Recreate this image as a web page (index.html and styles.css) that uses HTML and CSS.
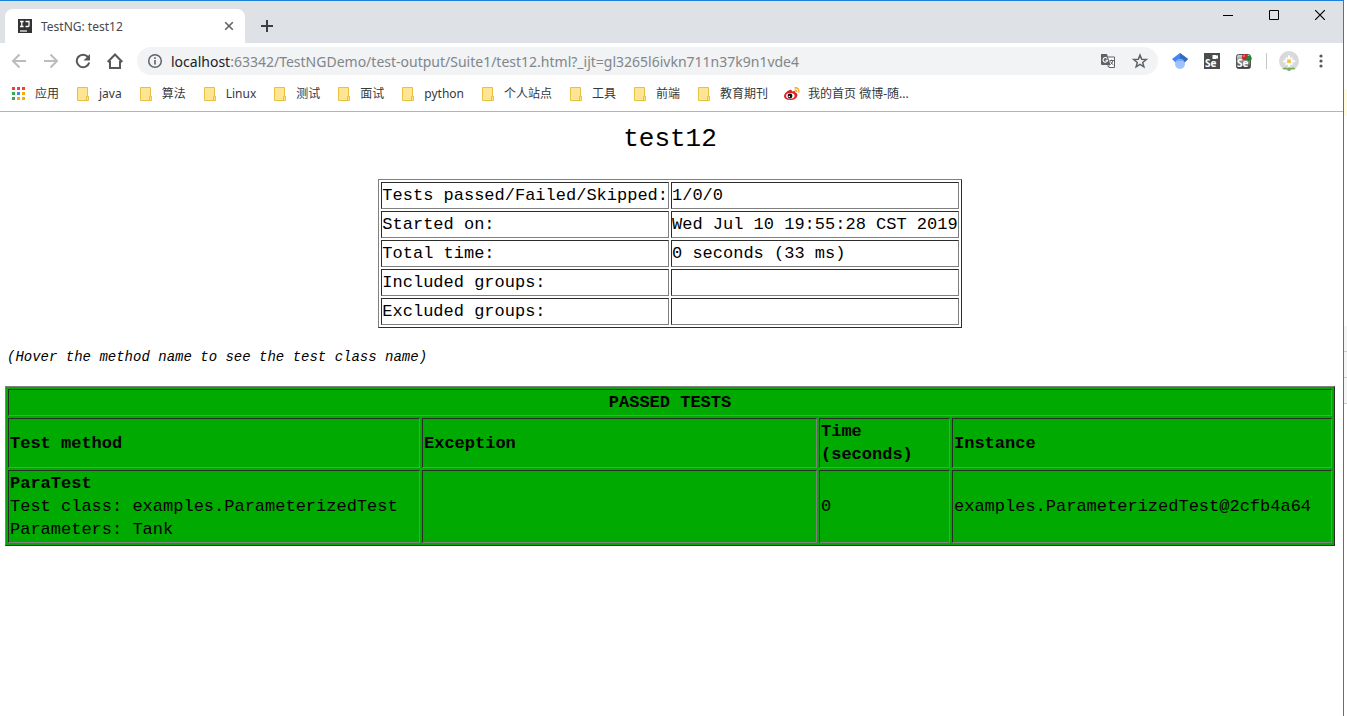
FILE: index.html
```html
<!DOCTYPE html>
<html lang="zh-CN">
<head>
<meta charset="utf-8">
<title>TestNG: test12</title>
<link rel="stylesheet" href="styles.css">
</head>
<body>
<div class="desktop">
<div class="window">
  <header class="tabstrip">
    <div class="tab">
      <svg class="favicon" width="14" height="14" viewBox="0 0 14 14"><rect width="14" height="14" fill="#333"/><path d="M2 2.500h3.600M3.800 2.500v5M2 7.500h3.600M7.500 2.500h3.500v4q0 1-1 1H7.500" fill="none" stroke="#fff" stroke-width="1.300"/><path d="M2 12h7" stroke="#fff" stroke-width="1.200"/></svg>
      <span class="tab-title">TestNG: test12</span>
      <button class="plain tab-close" aria-label="Close tab"><svg width="10" height="10" viewBox="0 0 10 10"><path d="M1.200 1.200l7.600 7.600M8.800 1.200L1.200 8.800" stroke="#5f6368" stroke-width="1.600"/></svg></button>
    </div>
    <button class="plain new-tab" aria-label="New tab"><svg width="12" height="12" viewBox="0 0 12 12"><path d="M6 0v12M0 6h12" stroke="#3c4043" stroke-width="2"/></svg></button>
    <div class="window-buttons">
      <button class="plain" aria-label="Minimize"><svg width="10" height="10" viewBox="0 0 10 10"><path d="M0 5.500h10" stroke="#000"/></svg></button>
      <button class="plain" aria-label="Maximize"><svg width="10" height="10" viewBox="0 0 10 10"><path d="M.5.5h9v9h-9z" fill="none" stroke="#000"/></svg></button>
      <button class="plain" aria-label="Close"><svg width="10" height="10" viewBox="0 0 10 10"><path d="M0 0l10 10M10 0L0 10" stroke="#000" stroke-width="1.200"/></svg></button>
    </div>
  </header>

  <div class="toolbar">
    <nav class="nav-buttons">
      <button class="plain" aria-label="Back"><svg width="16" height="16" viewBox="0 0 16 16"><path d="M15 8H2.500M8.500 1.500L2 8l6.500 6.500" fill="none" stroke="#babcbe" stroke-width="2"/></svg></button>
      <button class="plain" aria-label="Forward"><svg width="16" height="16" viewBox="0 0 16 16"><path d="M1 8h12.500M7.500 1.500L14 8l-6.500 6.500" fill="none" stroke="#babcbe" stroke-width="2"/></svg></button>
      <button class="plain" aria-label="Reload"><svg width="16" height="16" viewBox="0 0 16 16"><path d="M13 4A6.300 6.300 0 1 0 14.200 9.500" fill="none" stroke="#55585d" stroke-width="2"/><path d="M15 1v6.500H8.500z" fill="#55585d"/></svg></button>
      <button class="plain" aria-label="Home"><svg width="16" height="16" viewBox="0 0 16 16"><path d="M.7 9L8 1.500 15.300 9M3 8v7h10V8" fill="none" stroke="#55585d" stroke-width="2"/></svg></button>
    </nav>
    <div class="omnibox">
      <svg class="info" width="16" height="16" viewBox="0 0 16 16"><circle cx="8" cy="8" r="6.300" fill="none" stroke="#5f6368" stroke-width="1.500"/><path d="M8 7v4.500M8 4.300v1.700" stroke="#5f6368" stroke-width="1.600"/></svg>
      <label class="host" for="url">localhost</label>
      <input class="url" id="url" type="text" value=":63342/TestNGDemo/test-output/Suite1/test12.html?_ijt=gl3265l6ivkn711n37k9n1vde4">
      <button class="plain translate" aria-label="Translate"><svg width="16" height="16" viewBox="0 0 16 16"><path d="M8 4h6.500v10.500H9" fill="#fff" stroke="#5f6368"/><path d="M1 1h6l3.500 11H2q-1 0-1-1z" fill="#5f6368"/><path d="M7.200 5.500A2.300 2.300 0 1 0 7.600 7.200H5.500" fill="none" stroke="#fff" stroke-width="1.100"/><path d="M9.500 7.500H14M11.700 6.500v1M13 7.500q-.5 2.500-2.500 4M10.500 8.500q1 2 3 3.500" fill="none" stroke="#5f6368"/><path d="M7 12.500h3l-1.500 2z" fill="#5f6368"/></svg></button>
      <button class="plain" aria-label="Bookmark"><svg width="16" height="16" viewBox="0 0 16 16"><path d="M8 2l1.700 4.200 4.500.3-3.500 2.900 1.200 4.400L8 11.400l-3.900 2.400 1.200-4.400-3.500-2.900 4.500-.3z" fill="none" stroke="#5f6368" stroke-width="1.500"/></svg></button>
    </div>
    <div class="extensions">
      <button class="plain" aria-label="Scholar"><svg width="16" height="16" viewBox="0 0 16 16"><path d="M8 0l8 6-4 4H4L0 6z" fill="#4285f4"/><path d="M8 0l8 6-4 4-4-3z" fill="#356ac3"/><circle cx="8" cy="11" r="5" fill="#a0c3ff"/><path d="M3.500 9Q8 3 12.500 9 8 6.500 3.500 9" fill="#76a7fa"/></svg></button>
      <button class="plain" aria-label="Selenium IDE"><svg width="16" height="16" viewBox="0 0 16 16"><rect width="16" height="16" fill="#4b4d4d"/><path d="M8.500 2h4v1l1.500-1v4l-1.500-1v1h-4z" fill="#fff"/><text class="badge-text" x="1" y="14">Se</text></svg></button>
      <button class="plain" aria-label="Selenium recorder"><svg width="16" height="16" viewBox="0 0 16 16"><defs><linearGradient id="metal" x2="0" y2="1"><stop stop-color="#ddd"/><stop offset="1" stop-color="#333"/></linearGradient></defs><rect x=".5" y="1.500" width="14" height="14" rx="2" fill="url(#metal)" stroke="#555"/><text class="badge-text" x="1" y="14">Se</text><circle cx="9" cy="4" r="3.100" fill="#c9272b"/><circle cx="13" cy="5.500" r="2.700" fill="#24843b"/><circle cx="8" cy="3" r="1" fill="#ee7a75"/></svg></button>
      <span class="divider"></span>
      <button class="plain" aria-label="Profile"><svg width="20" height="20" viewBox="0 0 20 20"><circle cx="10" cy="10" r="10" fill="#d9d9d9"/><path d="M10 12v8M4 18q3-2 6 1 3-3 6-1" stroke="#75ad58" fill="none" stroke-width="1.500"/><g fill="#fff"><ellipse cx="10" cy="6.800" rx="1.300" ry="2.700"/><ellipse cx="10" cy="13.800" rx="1.300" ry="2.700"/><ellipse cx="6.500" cy="10.300" rx="2.700" ry="1.300"/><ellipse cx="13.500" cy="10.300" rx="2.700" ry="1.300"/><circle cx="7.500" cy="7.800" r="1.300"/><circle cx="12.500" cy="7.800" r="1.300"/><circle cx="7.500" cy="12.700" r="1.300"/><circle cx="12.500" cy="12.700" r="1.300"/></g><circle cx="10" cy="10.300" r="2" fill="#f4c33d"/></svg></button>
      <button class="plain menu" aria-label="Menu"><svg width="4" height="16" viewBox="0 0 4 16"><g fill="#55585d"><circle cx="2" cy="3" r="1.600"/><circle cx="2" cy="8" r="1.600"/><circle cx="2" cy="13" r="1.600"/></g></svg></button>
    </div>
  </div>

  <svg class="defs" width="0" height="0"><symbol id="folder" viewBox="0 0 12 14"><path d="M.5.5h10v9h1v4H.5z" fill="#ffe591" stroke="#e6c146"/><path d="M9.500 13V9.500h2" fill="none" stroke="#e6c146"/></symbol></svg>
  <nav class="bookmarks">
    <a href="#" class="apps"><svg width="13" height="13" viewBox="0 0 13 13"><g fill="#ea4335"><path d="M0 0h3v3H0zM5 0h3v3H5zM10 0h3v3h-3z"/></g><g fill="#34a853"><path d="M0 5h3v3H0zM0 10h3v3H0z"/></g><path d="M5 5h3v3H5z" fill="#4285f4"/><path d="M10 5h3v3h-3zM5 10h3v3H5zM10 10h3v3h-3z" fill="#fbaa05"/></svg>应用</a>
    <a href="#"><svg width="12" height="14"><use href="#folder"/></svg>java</a>
    <a href="#"><svg width="12" height="14"><use href="#folder"/></svg>算法</a>
    <a href="#"><svg width="12" height="14"><use href="#folder"/></svg>Linux</a>
    <a href="#"><svg width="12" height="14"><use href="#folder"/></svg>测试</a>
    <a href="#"><svg width="12" height="14"><use href="#folder"/></svg>面试</a>
    <a href="#"><svg width="12" height="14"><use href="#folder"/></svg>python</a>
    <a href="#"><svg width="12" height="14"><use href="#folder"/></svg>个人站点</a>
    <a href="#"><svg width="12" height="14"><use href="#folder"/></svg>工具</a>
    <a href="#"><svg width="12" height="14"><use href="#folder"/></svg>前端</a>
    <a href="#"><svg width="12" height="14"><use href="#folder"/></svg>教育期刊</a>
    <a href="#" class="weibo"><svg width="16" height="14" viewBox="0 0 16 14"><path d="M5.500 3Q8 1.800 8 4.500q4-1.200 3.500 1.200 2.500.8 1.800 3Q12 13 6.500 13 0 12.800 0 9q.5-3.500 5.500-6z" fill="#dd2128"/><ellipse cx="6.300" cy="8.800" rx="4.300" ry="2.900" fill="#fff"/><circle cx="6" cy="9" r="2.400" fill="#111"/><circle cx="5.300" cy="9.500" r=".8" fill="#fff"/><path d="M10.500.8q4.800-.5 4.500 5M10.500 3q2.500-.3 2.300 2.300" fill="none" stroke="#f5a52a" stroke-width="1.300"/></svg>我的首页 微博-随...</a>
  </nav>

  <main class="page">
    <h2 class="suite-title">test12</h2>
    <table class="report summary">
      <tbody>
      <tr><td>Tests passed/Failed/Skipped:</td><td>1/0/0</td></tr>
      <tr><td>Started on:</td><td>Wed Jul 10 19:55:28 CST 2019</td></tr>
      <tr><td>Total time:</td><td>0 seconds (33 ms)</td></tr>
      <tr><td>Included groups:</td><td></td></tr>
      <tr><td>Excluded groups:</td><td></td></tr>
      </tbody>
    </table>
    <p class="hint">(Hover the method name to see the test class name)</p>
    <table class="report passed">
      <colgroup><col class="c-method"><col class="c-exception"><col class="c-time"><col class="c-instance"></colgroup>
      <thead>
      <tr><th class="caption" colspan="4">PASSED TESTS</th></tr>
      <tr><th>Test method</th><th>Exception</th><th>Time<br>(seconds)</th><th>Instance</th></tr>
      </thead>
      <tbody>
      <tr><td title="examples.ParameterizedTest"><b>ParaTest</b><br>Test class: examples.ParameterizedTest<br>Parameters: Tank</td><td></td><td>0</td><td>examples.ParameterizedTest@2cfb4a64</td></tr>
      </tbody>
    </table>
  </main>
</div>
<aside class="behind"><div class="note"></div><div class="rows"><i></i><i></i><i></i></div></aside>
</div>
</body>
</html>
```
FILE: styles.css
```css
* { box-sizing: border-box; }
body { margin: 0; background: #fff; font-family: "Open Sans", "Noto Sans CJK SC", sans-serif; }
svg { display: block; flex: none; }

.desktop { display: grid; grid-template-columns: minmax(0, 1fr) 3px; min-height: 100vh; }
.window { border-top: 1px solid #1a82d8; border-right: 1px solid #1a82d8; }
.plain { display: grid; place-items: center; margin: 0; padding: 0; border: 0; background: none; }

.tabstrip { display: flex; height: 42px; padding-left: 5px; background: #dee1e6; }
.tab { display: flex; align-items: center; width: 240px; margin-top: 8px; padding: 0 11px 0 13px; background: #fff; border-radius: 8px 8px 0 0; }
.tab-title { flex: 1; padding-left: 9px; font-family: "Noto Sans", sans-serif; font-size: 12px; color: #45494d; }
.new-tab { width: 44px; padding-top: 8px; }
.window-buttons { display: grid; grid-template-columns: repeat(3, 46px); height: 28px; margin-left: auto; }

.toolbar { display: flex; align-items: center; height: 36px; }
.nav-buttons { display: flex; gap: 16px; padding-left: 11px; }
.omnibox { display: flex; flex: 1; align-items: center; height: 28px; margin-left: 14px; padding: 0 10px; border-radius: 14px; background: #f1f3f4; font-family: "Noto Sans", sans-serif; font-size: 14px; }
.host { padding-left: 8px; color: #202124; }
.url { flex: 1; min-width: 0; padding: 0; border: 0; background: none; font: inherit; color: #80868b; }
.translate { margin-right: 16px; }
.extensions { display: flex; align-items: center; gap: 16px; padding: 0 12px 0 14px; }
.divider { width: 1px; height: 16px; margin: 0 -4px 0 -2px; background: #c4c7ca; }
.menu { width: 20px; margin-left: -4px; }
.badge-text { font: bold 10px "Open Sans", sans-serif; fill: #fff; }

.defs { position: absolute; }
.bookmarks { display: flex; align-items: center; gap: 18px; height: 33px; padding: 0 12px 3px; border-bottom: 1px solid #b3b5b7; white-space: nowrap; overflow: hidden; }
.bookmarks a { display: flex; align-items: center; gap: 10px; font-family: "Noto Sans", "Noto Sans CJK SC", sans-serif; font-size: 12px; line-height: 20px; color: #35383c; text-decoration: none; }
.bookmarks .weibo { gap: 8px; margin-left: -2px; }

.page { padding: 9px 8px 8px 5px; font-family: "Liberation Mono", monospace; font-size: 17px; line-height: 23px; color: #000; }
.suite-title { margin: 0 0 22px; font-size: 26px; font-weight: 400; line-height: 36px; text-align: center; }
.report { border-spacing: 2px; border: 1px solid; border-color: #808080 #2c2c2c #2c2c2c #808080; }
.report td, .report th { height: 27px; padding: 1px; border: 1px solid; border-color: #2c2c2c #808080 #808080 #2c2c2c; text-align: left; }
.summary { margin: 0 auto; }
.report.summary td { padding: 1px 0; }
.hint { margin: 18px 0 17px; padding-left: 2px; font-size: 14px; font-style: italic; }
.passed { width: 100%; background: #0a0; table-layout: fixed; }
.report .caption { text-align: center; }
.c-method { width: 412px; }
.c-exception { width: 395px; }
.c-time { width: 131px; }

.behind { display: flex; flex-direction: column; padding-top: 89px; }
.note { height: 27px; background: #fffbdc; }
.rows { margin-top: 210px; background: #f5f5f5; }
.rows i { display: block; height: 26px; border-bottom: 1px solid #ccc; }
```
